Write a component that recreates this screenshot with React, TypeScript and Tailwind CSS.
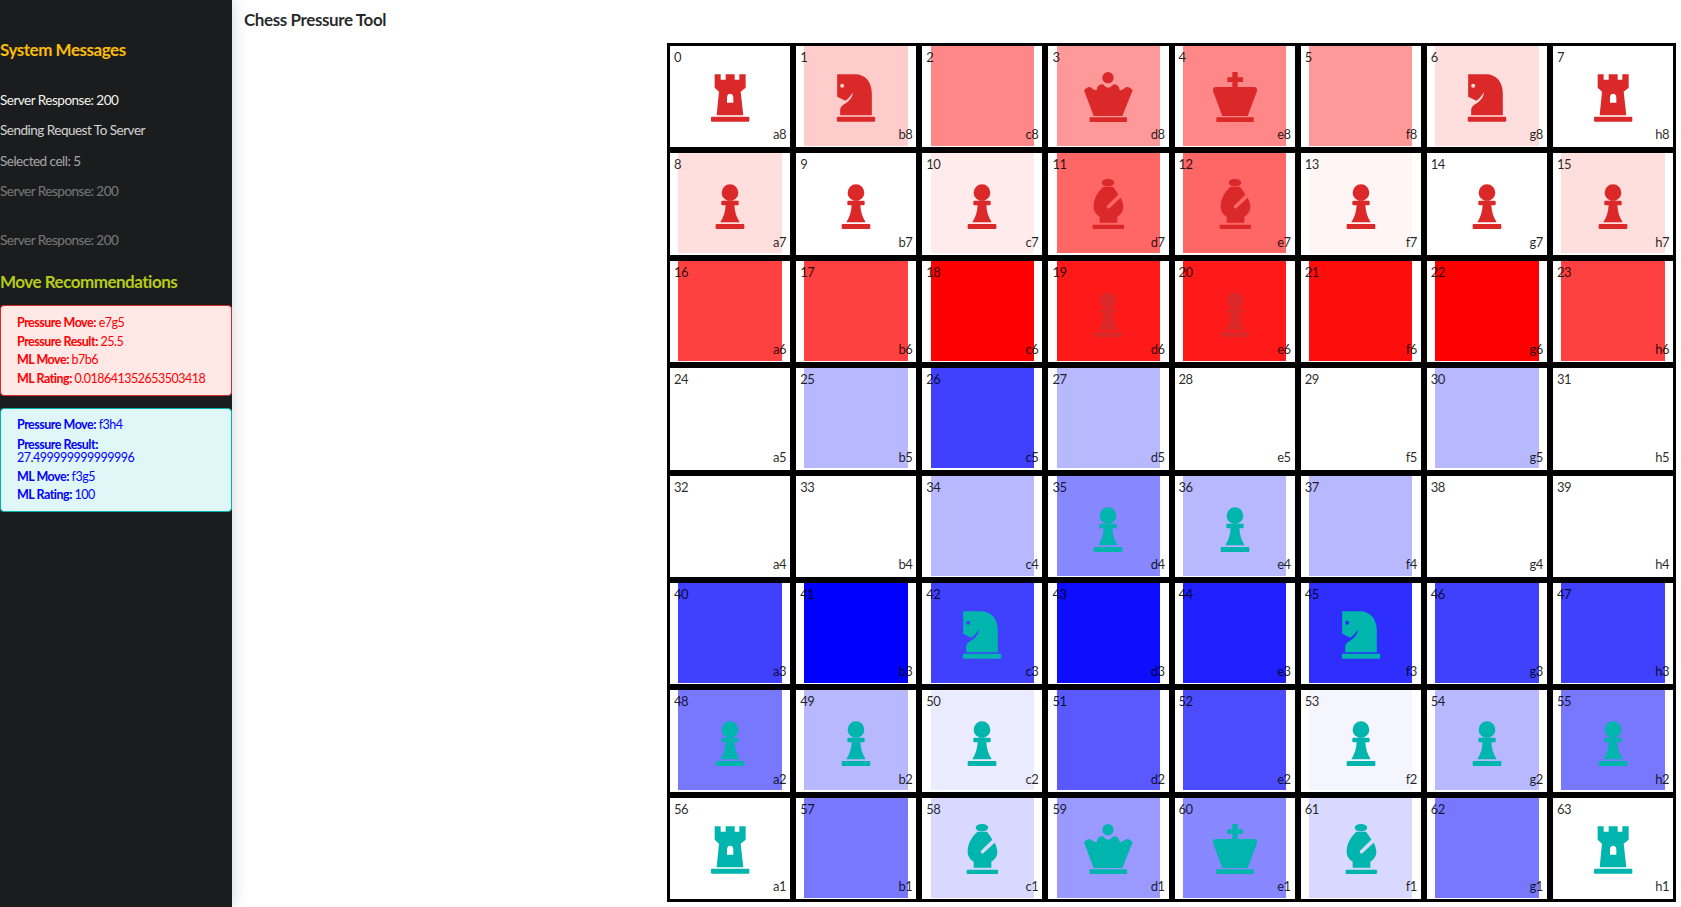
import React from "react";

type Piece = "r" | "n" | "b" | "q" | "k" | "p" | "";

// Drawn in a 150x150 box, base of the piece on the bottom edge
const ICONS: Record<Exclude<Piece, "">, { box: string; d: string }> = {
  r: {
    box: "133 125 150 150",
    d: "M162 132H180V148H195V132H222V148H236V132H255V172L240 184L248 255H168L175 184L162 172ZM199 217H218V202C218 194 214 190 208.500 190C203 190 199 194 199 202ZM154 259H263Q266 259 266 262V271Q266 274 263 274H154Q151 274 151 271V262Q151 259 154 259Z",
  },
  n: {
    box: "512.500 125 150 150",
    d: "M531 132H585C615 132 635 155 635 190V255H540V240C540 225 555 222 565 212C572 205 578 198 578 186C572 196 565 205 556 211L531 199ZM546 160A6 6 0 1 0 546.100 172A6 6 0 1 0 546 160ZM533 259H642Q645 259 645 262V271Q645 274 642 274H533Q530 274 530 271V262Q530 259 533 259Z",
  },
  p: {
    box: "512 448 150 150",
    d: "M587 464A25 25 0 1 1 586.900 514A25 25 0 1 1 587 464ZM564 513H610Q613 513 613 516V524Q613 527 610 527H600C601 545 606 563 616 578H558C568 563 573 545 574 527H564Q561 527 561 524V516Q561 513 564 513ZM547 583H627Q630 583 630 586V595Q630 598 627 598H547Q544 598 544 595V586Q544 583 547 583Z",
  },
  q: {
    box: "130 123 150 150",
    d: "M205 123A17 17 0 1 1 204.900 157A17 17 0 1 1 205 123ZM133 178Q145 165 153 169Q163 180 171 177Q172 160 190 160Q205 180 222 160Q238 160 240 177Q248 180 258 169Q268 165 279 178L248 255H162ZM150 259H262V273H150Z",
  },
  k: {
    box: "509 123 150 150",
    d: "M576 123H592V139H608V153H592V168H640Q652 168 650 180L622 255H546L518 180Q516 168 528 168H576V153H561V139H576ZM528 259H640V273H528Z",
  },
  b: {
    box: "130 447 150 150",
    d: "M205 447C230 447 230 469 205 469C180 469 180 447 205 447ZM191 470H220C226 478 232 486 236 494L202 527Q200 531 203 534Q206 537 209 535L243 503C248 512 251 522 251 530C251 545 241 555 233 560V578H180V560C172 555 162 545 162 530C162 505 175 485 191 470ZM162 584H250Q253 584 253 586V595Q253 597 250 597H162Q159 597 159 595V586Q159 584 162 584Z",
  },
};

const PIECES: Piece[] = [
  "r", "n", "", "q", "k", "", "n", "r",
  "p", "p", "p", "b", "b", "p", "p", "p",
  "", "", "", "p", "p", "", "", "",
  "", "", "", "", "", "", "", "",
  "", "", "", "p", "p", "", "", "",
  "", "", "n", "", "", "n", "", "",
  "p", "p", "p", "", "", "p", "p", "p",
  "r", "", "b", "q", "k", "b", "", "r",
];

// pressure per cell, negative is black's side (red), positive is white's (blue)
const PRESSURE = [
  0, -0.2, -0.47, -0.4, -0.47, -0.4, -0.13, 0,
  -0.13, 0, -0.08, -0.6, -0.6, -0.04, 0, -0.13,
  -0.75, -0.75, -1, -0.9, -0.9, -0.95, -1, -0.75,
  0, 0.28, 0.75, 0.28, 0, 0, 0.28, 0,
  0, 0, 0.28, 0.47, 0.28, 0.28, 0, 0,
  0.75, 1, 0.75, 0.95, 0.88, 0.82, 0.75, 0.75,
  0.53, 0.28, 0.08, 0.65, 0.7, 0.04, 0.28, 0.53,
  0, 0.53, 0.15, 0.4, 0.47, 0.15, 0.53, 0,
];

const Cell = ({ index }: { index: number }) => {
  const piece = PIECES[index];
  const value = PRESSURE[index];
  const icon = piece ? ICONS[piece] : null;
  const file = "abcdefgh"[index % 8];
  const rank = 8 - Math.floor(index / 8);
  const background =
    value < 0 ? `rgba(255,0,0,${-value})` : value > 0 ? `rgba(0,0,255,${value})` : "transparent";

  return (
    <div className="relative flex justify-center border-[3px] border-black bg-white">
      <div
        className="flex h-[100px] w-[103.5px] items-end justify-center pb-[24px]"
        style={{ background }}
      >
        {icon && (
          <svg
            viewBox={icon.box}
            width={50}
            height={50}
            fillRule="evenodd"
            className={`shrink-0 ${index < 32 ? "fill-[#db2828]" : "fill-[#00b5ad]"}`}
          >
            <path d={icon.d} />
          </svg>
        )}
      </div>
      <span className="absolute left-[4px] top-[1px] text-[13px] leading-[20px] tracking-[-0.5px] text-black/85">{index}</span>
      <span className="absolute bottom-[3px] right-[4px] text-[13px] leading-[20px] tracking-[-0.5px] text-black/85">
        {file}
        {rank}
      </span>
    </div>
  );
};

const Rec = ({ label, value }: { label: string; value: string }) => (
  <p className="mb-[5px] text-[12.5px] leading-[13.5px] tracking-[-0.5px] last:mb-0">
    <b className="font-bold">{label}:</b> {value}
  </p>
);

export default function App() {
  return (
    <div className="flex h-[907px] overflow-hidden bg-white font-['Lato','Noto_Sans',sans-serif] text-[14px]">
      <aside className="z-10 flex w-[232px] shrink-0 flex-col bg-[#1b1c1d] pt-[38px] text-white shadow-[0_0_16px_rgba(0,0,0,0.18)]">
        <h3 className="text-[17px] font-bold leading-[24px] tracking-[-0.47px] text-[#fbbd08]">System Messages</h3>
        <div className="mt-[28px] text-[13.5px] leading-[20px] tracking-[-0.5px]">
          <p className="text-[#f4f4f0]">Server Response: 200</p>
          <p className="mt-[10px] opacity-80">Sending Request To Server</p>
          <p className="mt-[10.5px] opacity-60">Selected cell: 5</p>
          <p className="mt-[10.5px] opacity-40">Server Response: 200</p>
          <p className="mt-[29px] opacity-40">Server Response: 200</p>
        </div>
        <h3 className="mt-[20px] text-[17px] font-bold leading-[24px] tracking-[-0.5px] text-[#b5cc18]">Move Recommendations</h3>
        <div className="mt-[11px] flex h-[91px] flex-col justify-center rounded-[4px] border border-[#db2828] bg-[#ffe8e6] pl-[16px] text-[#ff0000]">
          <Rec label="Pressure Move" value="e7g5" />
          <Rec label="Pressure Result" value="25.5" />
          <Rec label="ML Move" value="b7b6" />
          <Rec label="ML Rating" value="0.018641352653503418" />
        </div>
        <div className="mt-[12px] flex h-[104px] flex-col justify-center rounded-[4px] border border-[#00b5ad] bg-[#e0f7f7] pl-[16px] pr-[16px] text-[#0000ff]">
          <Rec label="Pressure Move" value="f3h4" />
          <div className="mb-[5px] mt-[1px] w-[110px]">
            <Rec label="Pressure Result" value="27.499999999999996" />
          </div>
          <Rec label="ML Move" value="f3g5" />
          <Rec label="ML Rating" value="100" />
        </div>
      </aside>
      <main className="flex min-w-0 flex-1 flex-col pl-[12px] pr-[5px]">
        <h1 className="mt-[9px] text-[17px] font-bold leading-[22px] tracking-[-0.4px] text-black/85">Chess Pressure Tool</h1>
        <div className="ml-auto mt-[12px] grid h-[859px] w-[1009px] grid-cols-8 grid-rows-8">
          {PIECES.map((_, i) => (
            <Cell key={i} index={i} />
          ))}
        </div>
      </main>
    </div>
  );
}
